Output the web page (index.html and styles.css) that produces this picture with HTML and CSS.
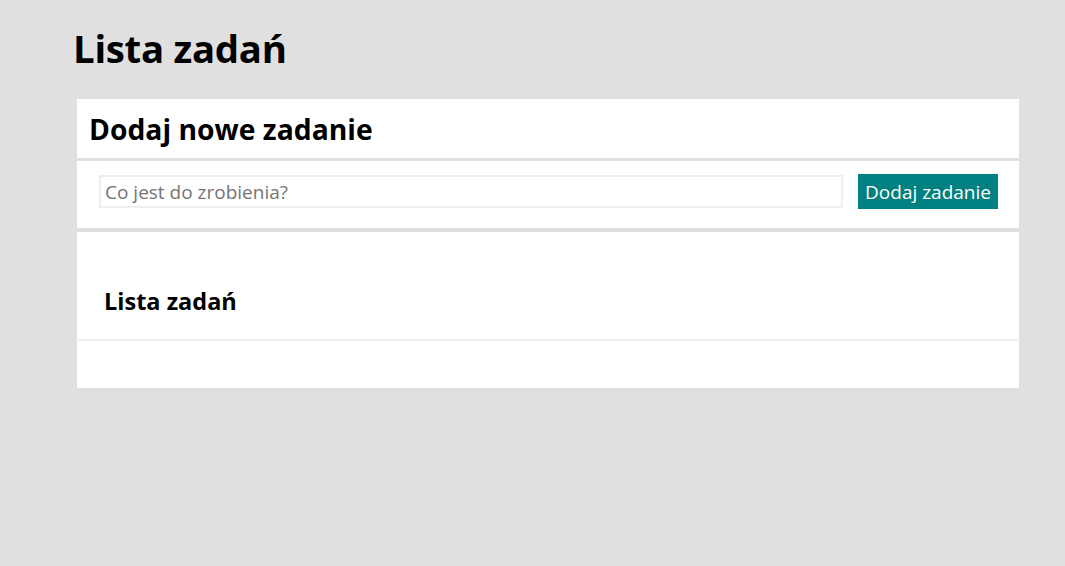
FILE: index.html
```html
<!DOCTYPE html>
<html lang="pl">
<head>
<meta charset="utf-8">
<title>Lista zadań</title>
<link rel="stylesheet" href="styles.css">
</head>
<body>
<main class="app">
  <h1 class="app-title">Lista zadań</h1>
  <div class="card">
    <section class="card-head">
      <h2 class="card-title">Dodaj nowe zadanie</h2>
    </section>
    <section class="card-form">
      <form class="add-form">
        <input class="task-input" type="text" placeholder="Co jest do zrobienia?">
        <button class="add-btn" type="button">Dodaj zadanie</button>
      </form>
    </section>
    <section class="card-list">
      <h3 class="list-title">Lista zadań</h3>
      <ul class="tasks"></ul>
    </section>
  </div>
</main>
</body>
</html>
```

FILE: styles.css
```css
* { box-sizing: border-box; }
html, body {
  margin: 0;
  padding: 0;
  background: #e0e0e0;
  font-family: "Open Sans", "Noto Sans", sans-serif;
  color: #000;
}
.app {
  padding: 23px 0 0 77px;
}
.app-title {
  margin: 0 0 26px -4px;
  font-size: 38.4px;
  font-weight: 700;
  line-height: 50px;
  letter-spacing: -0.3px;
}
.card {
  width: 942px;
  display: flex;
  flex-direction: column;
}
.card-head {
  background: #fff;
  height: 59px;
  display: flex;
  align-items: center;
  padding-left: 12px;
}
.card-title {
  margin: 0;
  font-size: 28.3px;
  font-weight: 700;
  line-height: 36px;
}
.card-form {
  margin-top: 3px;
  background: #fff;
  height: 67px;
  padding: 13px 21px 0 22px;
}
.add-form {
  display: flex;
  align-items: center;
  gap: 15px;
  margin: 0;
}
.task-input {
  width: 744px;
  height: 33px;
  border: 2px solid #eeeeee;
  padding: 0 4px;
  font-family: inherit;
  font-size: 19px;
  color: #333;
  outline: none;
  background: #fff;
}
.task-input::placeholder {
  color: #757575;
}
.add-btn {
  width: 140px;
  height: 35px;
  border: none;
  background: #008080;
  color: #fff;
  font-family: inherit;
  font-size: 19px;
  padding: 0;
}
.card-list {
  margin-top: 4px;
  background: #fff;
  height: 156px;
  padding: 54px 1px 0 1px;
}
.list-title {
  margin: 0 0 0 26px;
  font-size: 23.5px;
  font-weight: 700;
  line-height: 30px;
}
.tasks {
  list-style: none;
  margin: 23px 0 0 0;
  padding: 0;
  border-top: 2px solid #eeeeee;
}
```
